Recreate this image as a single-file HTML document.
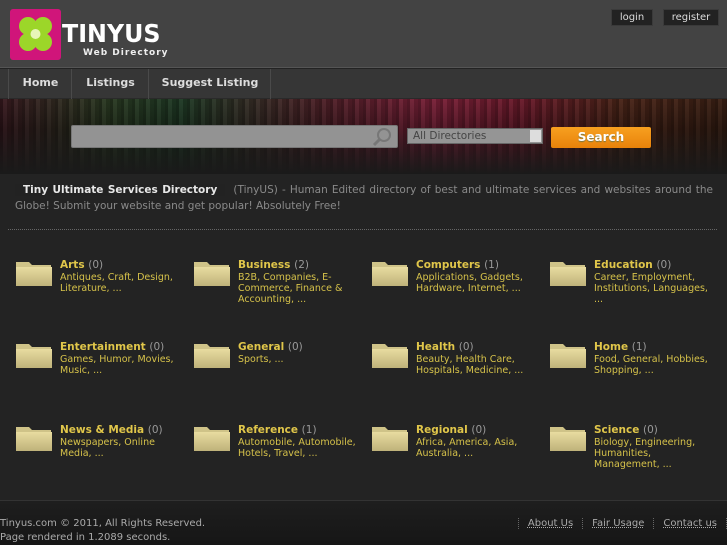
<!DOCTYPE html>
<html><head><style>
*{margin:0;padding:0;box-sizing:border-box}
body{width:727px;height:545px;overflow:hidden;background:#232323;font-family:"DejaVu Sans","Liberation Sans",sans-serif;font-size:10px;color:#9a9a9a;position:relative}
.hdr{position:absolute;left:0;top:0;width:727px;height:68px;background:#434343;border-bottom:1px solid #555}
.nav{position:absolute;left:0;top:69px;width:727px;height:30px;background:#363636;border-bottom:1px solid #2a2a2a}
.nav div{position:absolute;top:0;height:30px;line-height:28px;border-left:1px solid #4a4a4a;color:#ddd;font-weight:bold;font-size:11px;text-align:center}
.ban{position:absolute;left:0;top:99px;width:727px;height:75px;background:linear-gradient(90deg,#3a1a20 0%,#2a3a22 15%,#1f3a25 25%,#502028 45%,#7a2038 60%,#6a1a2a 72%,#4a2418 85%,#3a2014 100%)}
.ban:before{content:"";position:absolute;inset:0;background:repeating-linear-gradient(90deg,rgba(0,0,0,.25) 0 3px,rgba(255,255,255,.03) 3px 7px,rgba(0,0,0,.15) 7px 11px)}
.ban:after{content:"";position:absolute;inset:0;background:linear-gradient(180deg,rgba(0,0,0,0) 0%,rgba(0,0,0,.3) 40%,#1a1a1a 100%)}
.btn{position:absolute;top:9px;height:17px;background:#222;color:#ddd;font-size:10px;line-height:16px;text-align:center;border:1px solid #3a3a3a}
.cat{position:absolute;width:175px}
.fold{position:absolute;left:0;top:0;width:37px;height:28px}
.cat .t{position:absolute;left:45px;top:1px;font-weight:bold;color:#e0c64a;font-size:10.5px;white-space:nowrap}
.cat .t span{font-weight:normal;color:#999}
.cat .s{position:absolute;left:45px;top:14px;width:120px;color:#d6c24a;font-size:9.5px;line-height:11px}
a{color:inherit;text-decoration:none}
</style></head><body>
<div class="hdr">
 <div style="position:absolute;left:10px;top:9px;width:51px;height:51px;background:#d0157a;border-radius:3px"></div>
 <svg style="position:absolute;left:12px;top:11px" width="47" height="47" viewBox="0 0 47 47">
  <g fill="#9cd629"><circle cx="16" cy="15" r="9"/><circle cx="31" cy="15" r="9"/><circle cx="16" cy="31" r="9"/><circle cx="31" cy="31" r="9"/></g>
  <circle cx="23.5" cy="23" r="5" fill="#e7f5b8"/></svg>
 <div style="position:absolute;left:62px;top:21px;font-family:'DejaVu Sans',sans-serif;font-weight:bold;font-size:25px;color:#fff;line-height:26px;transform:scaleX(0.95);transform-origin:left">TINYUS</div>
 <div style="position:absolute;left:83px;top:48px;font-size:9px;color:#eee;letter-spacing:1px;font-weight:bold">Web Directory</div>
 <div class="btn" style="left:611px;width:42px">login</div>
 <div class="btn" style="left:663px;width:56px">register</div>
</div>
<div class="nav">
 <div style="left:8px;width:64px">Home</div>
 <div style="left:71px;width:78px">Listings</div>
 <div style="left:148px;width:123px">Suggest Listing</div>
 <div style="left:270px;width:1px"></div>
</div>
<div class="ban"></div>
<div style="position:absolute;left:71px;top:125px;width:327px;height:23px;background:#939393;border-radius:2px;border:1px solid #777"></div>
<svg style="position:absolute;left:370px;top:127px" width="24" height="20"><circle cx="14" cy="8" r="6" fill="none" stroke="#777" stroke-width="2"/><line x1="10" y1="12" x2="4" y2="18" stroke="#777" stroke-width="3"/></svg>
<div style="position:absolute;left:407px;top:128px;width:136px;height:16px;background:#959595;border:1px solid #666;color:#444;font-size:10.5px;line-height:14px;padding-left:5px">All Directories<span style="position:absolute;right:1px;top:1px;width:11px;height:12px;background:#ddd"></span></div>
<div style="position:absolute;left:551px;top:127px;width:100px;height:21px;background:linear-gradient(#f7a020,#e8820a);border-radius:2px;color:#fff;font-weight:bold;font-size:12px;text-align:center;line-height:20px;text-shadow:0 1px 1px #774">Search</div>
<div style="position:absolute;left:15px;top:182px;width:698px;font-size:10.5px;line-height:16px;color:#8a8a8a;text-align:justify"><b style="color:#e8e8e8;background:#222;padding:0 8px;margin-right:4px">Tiny Ultimate Services Directory</b> (TinyUS) - Human Edited directory of best and ultimate services and websites around the Globe! Submit your website and get popular! Absolutely Free!</div>
<div style="position:absolute;left:8px;top:229px;width:709px;border-top:1px dotted #666"></div>

<svg width="0" height="0" style="position:absolute"><defs><linearGradient id="fg" x1="0" y1="0" x2="0" y2="1"><stop offset="0" stop-color="#e8dca0"/><stop offset="1" stop-color="#bfb27a"/></linearGradient></defs></svg>

<div class="cat" style="left:15px;top:258px"><svg class="fold" viewBox="0 0 37 28"><path d="M1 4h13l3 3h19v21H1z" fill="#cfc388"/><rect x="1" y="9" width="36" height="19" fill="url(#fg)"/></svg><div class="t">Arts <span>(0)</span></div><div class="s">Antiques, Craft, Design, Literature, ...</div></div>
<div class="cat" style="left:193px;top:258px"><svg class="fold" viewBox="0 0 37 28"><path d="M1 4h13l3 3h19v21H1z" fill="#cfc388"/><rect x="1" y="9" width="36" height="19" fill="url(#fg)"/></svg><div class="t">Business <span>(2)</span></div><div class="s">B2B, Companies, E-Commerce, Finance &amp; Accounting, ...</div></div>
<div class="cat" style="left:371px;top:258px"><svg class="fold" viewBox="0 0 37 28"><path d="M1 4h13l3 3h19v21H1z" fill="#cfc388"/><rect x="1" y="9" width="36" height="19" fill="url(#fg)"/></svg><div class="t">Computers <span>(1)</span></div><div class="s">Applications, Gadgets, Hardware, Internet, ...</div></div>
<div class="cat" style="left:549px;top:258px"><svg class="fold" viewBox="0 0 37 28"><path d="M1 4h13l3 3h19v21H1z" fill="#cfc388"/><rect x="1" y="9" width="36" height="19" fill="url(#fg)"/></svg><div class="t">Education <span>(0)</span></div><div class="s">Career, Employment, Institutions, Languages, ...</div></div>

<div class="cat" style="left:15px;top:340px"><svg class="fold" viewBox="0 0 37 28"><path d="M1 4h13l3 3h19v21H1z" fill="#cfc388"/><rect x="1" y="9" width="36" height="19" fill="url(#fg)"/></svg><div class="t">Entertainment <span>(0)</span></div><div class="s">Games, Humor, Movies, Music, ...</div></div>
<div class="cat" style="left:193px;top:340px"><svg class="fold" viewBox="0 0 37 28"><path d="M1 4h13l3 3h19v21H1z" fill="#cfc388"/><rect x="1" y="9" width="36" height="19" fill="url(#fg)"/></svg><div class="t">General <span>(0)</span></div><div class="s">Sports, ...</div></div>
<div class="cat" style="left:371px;top:340px"><svg class="fold" viewBox="0 0 37 28"><path d="M1 4h13l3 3h19v21H1z" fill="#cfc388"/><rect x="1" y="9" width="36" height="19" fill="url(#fg)"/></svg><div class="t">Health <span>(0)</span></div><div class="s">Beauty, Health Care, Hospitals, Medicine, ...</div></div>
<div class="cat" style="left:549px;top:340px"><svg class="fold" viewBox="0 0 37 28"><path d="M1 4h13l3 3h19v21H1z" fill="#cfc388"/><rect x="1" y="9" width="36" height="19" fill="url(#fg)"/></svg><div class="t">Home <span>(1)</span></div><div class="s">Food, General, Hobbies, Shopping, ...</div></div>

<div class="cat" style="left:15px;top:423px"><svg class="fold" viewBox="0 0 37 28"><path d="M1 4h13l3 3h19v21H1z" fill="#cfc388"/><rect x="1" y="9" width="36" height="19" fill="url(#fg)"/></svg><div class="t">News &amp; Media <span>(0)</span></div><div class="s">Newspapers, Online Media, ...</div></div>
<div class="cat" style="left:193px;top:423px"><svg class="fold" viewBox="0 0 37 28"><path d="M1 4h13l3 3h19v21H1z" fill="#cfc388"/><rect x="1" y="9" width="36" height="19" fill="url(#fg)"/></svg><div class="t">Reference <span>(1)</span></div><div class="s">Automobile, Automobile, Hotels, Travel, ...</div></div>
<div class="cat" style="left:371px;top:423px"><svg class="fold" viewBox="0 0 37 28"><path d="M1 4h13l3 3h19v21H1z" fill="#cfc388"/><rect x="1" y="9" width="36" height="19" fill="url(#fg)"/></svg><div class="t">Regional <span>(0)</span></div><div class="s">Africa, America, Asia, Australia, ...</div></div>
<div class="cat" style="left:549px;top:423px"><svg class="fold" viewBox="0 0 37 28"><path d="M1 4h13l3 3h19v21H1z" fill="#cfc388"/><rect x="1" y="9" width="36" height="19" fill="url(#fg)"/></svg><div class="t">Science <span>(0)</span></div><div class="s">Biology, Engineering, Humanities, Management, ...</div></div>

<div style="position:absolute;left:0;top:500px;width:727px;height:45px;background:linear-gradient(#1e1e1e,#161616);border-top:1px solid #333"></div>
<div style="position:absolute;left:0;top:517px;font-size:10px;color:#aaa;line-height:14px">Tinyus.com © 2011, All Rights Reserved.<br>Page rendered in 1.2089 seconds.</div>
<div style="position:absolute;right:0;top:517px;font-size:10px;color:#aaa;line-height:14px;white-space:nowrap">
<span style="border-left:1px dotted #666;padding:0 9px"><u style="text-decoration-style:dotted">About Us</u></span><span style="border-left:1px dotted #666;padding:0 9px"><u style="text-decoration-style:dotted">Fair Usage</u></span><span style="border-left:1px dotted #666;padding:0 9px"><u style="text-decoration-style:dotted">Contact us</u></span><span style="border-left:1px dotted #666"></span></div>
</body></html>
